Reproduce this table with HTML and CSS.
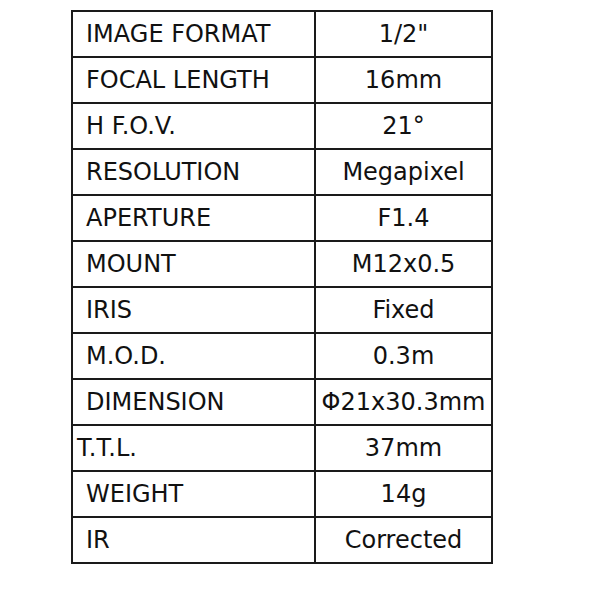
FILE: index.html
```html
<!DOCTYPE html>
<html>
<head>
<meta charset="utf-8">
<link rel="stylesheet" href="styles.css">
</head>
<body>
<table class="spec">
<tr><td class="k">IMAGE FORMAT</td><td class="v">1/2"</td></tr>
<tr><td class="k">FOCAL LENGTH</td><td class="v">16mm</td></tr>
<tr><td class="k">H F.O.V.</td><td class="v">21°</td></tr>
<tr><td class="k">RESOLUTION</td><td class="v">Megapixel</td></tr>
<tr><td class="k">APERTURE</td><td class="v">F1.4</td></tr>
<tr><td class="k">MOUNT</td><td class="v">M12x0.5</td></tr>
<tr><td class="k">IRIS</td><td class="v">Fixed</td></tr>
<tr><td class="k">M.O.D.</td><td class="v">0.3m</td></tr>
<tr><td class="k">DIMENSION</td><td class="v">Φ21x30.3mm</td></tr>
<tr><td class="k tight">T.T.L.</td><td class="v">37mm</td></tr>
<tr><td class="k">WEIGHT</td><td class="v">14g</td></tr>
<tr><td class="k">IR</td><td class="v">Corrected</td></tr>
</table>
</body>
</html>
```
FILE: styles.css
```css
html, body {
  margin: 0;
  padding: 0;
  background: #fff;
}
body {
  padding: 10px 0 0 71px;
  font-family: "DejaVu Sans", sans-serif;
  color: #111;
}
.spec {
  border-collapse: collapse;
  width: 422px;
  table-layout: fixed;
}
.spec td {
  box-sizing: border-box;
  border: 2px solid #1a1a1a;
  height: 46px;
  padding: 0 2px;
  font-size: 24px;
  line-height: 1;
  vertical-align: middle;
  white-space: nowrap;
}
.spec td.k {
  width: 243px;
  padding-left: 13px;
  text-align: left;
}
.spec td.k.tight {
  padding-left: 4px;
}
.spec td.v {
  text-align: center;
}
```
